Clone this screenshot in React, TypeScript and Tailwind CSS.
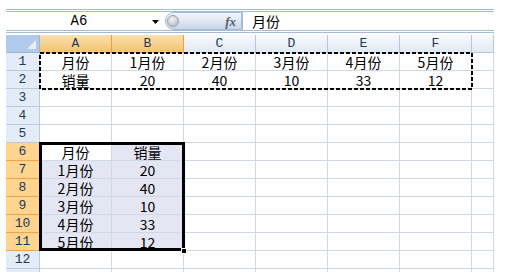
const COLS = ["A", "B", "C", "D", "E", "F", ""];

const DATA: string[][] = [
  ["月份", "1月份", "2月份", "3月份", "4月份", "5月份"],
  ["销量", "20", "40", "10", "33", "12"],
  [],
  [],
  [],
  ["月份", "销量"],
  ["1月份", "20"],
  ["2月份", "40"],
  ["3月份", "10"],
  ["4月份", "33"],
  ["5月份", "12"],
  [],
  [],
];

const cellFont = { fontFamily: '"Noto Sans CJK SC", "Liberation Sans", sans-serif' };
const headFont = { fontFamily: '"Liberation Mono", "Noto Sans CJK SC", monospace' };

function FormulaBar() {
  return (
    <div className="pt-[9px] pb-[2px]">
      <div className="ml-[6px] w-[488px] h-[24px] flex border-y-[3px] border-double border-[#a3bbd7] bg-white">
        <div className="w-[159px] flex items-center">
          <span className="w-[146px] text-center text-[14px] leading-none text-black" style={headFont}>
            A6
          </span>
          <svg width="7" height="4" viewBox="0 0 7 4" className="mt-[2px]">
            <path d="M0 0h7L3.5 4z" fill="#000" />
          </svg>
        </div>
        <div className="w-[77px] flex items-center justify-between rounded-l-full border border-[#a9bdd6] bg-gradient-to-b from-[#f6f8fb] to-[#c8d5e6]">
          <div className="ml-[1px] w-[12px] h-[12px] rounded-full bg-[radial-gradient(circle_at_40%_35%,#f4f5f7,#a9b0ba)] border border-[#9aa4b0]" />
          <span
            className="mr-[5px] text-[13px] italic font-bold text-[#56606c] leading-none"
            style={{ fontFamily: '"Liberation Serif", serif' }}
          >
            fx
          </span>
        </div>
        <div className="flex-1 flex items-center pl-[9px] border-l border-[#a3bbd7] text-[14px] leading-none text-black" style={cellFont}>
          月份
        </div>
      </div>
    </div>
  );
}

function Sheet() {
  return (
    <div className="relative ml-[6px] w-[488px] grid grid-cols-[34px_72px_72px_72px_72px_72px_72px_22px]">
      {/* header row */}
      <div className="relative h-[18px] bg-[#b2caea] border-r border-b border-[#9eb6ce]">
        <svg width="9" height="9" viewBox="0 0 9 9" className="absolute right-[3px] bottom-[3px]">
          <path d="M9 0v9H0z" fill="#e9eef5" />
        </svg>
      </div>
      {COLS.map((c, i) => {
        const sel = i < 2;
        return (
          <div
            key={`col${i}`}
            className={
              sel
                ? "h-[18px] flex items-center justify-center text-[13px] text-[#1e395b] bg-gradient-to-b from-[#fae0b0] to-[#f3c46c] border-r border-b border-[#f29b44]"
                : "h-[18px] flex items-center justify-center text-[13px] text-[#1e395b] bg-gradient-to-b from-[#f8fafd] to-[#e2e9f2] border-r border-b border-[#b4c6dc]"
            }
            style={headFont}
          >
            {c}
          </div>
        );
      })}

      {DATA.map((row, r) => {
        const selRow = r >= 5 && r <= 10;
        return [
          <div
            key={`h${r}`}
            className={
              selRow
                ? "h-[18px] flex items-center justify-center text-[13px] text-[#1e395b] bg-[#fed48e] border-r border-b border-[#f2a24a]"
                : "h-[18px] flex items-center justify-center text-[13px] text-[#1e395b] bg-[#e4ecf7] border-r border-b border-[#b9cbe0]"
            }
            style={headFont}
          >
            {r < 12 ? r + 1 : ""}
          </div>,
          ...COLS.map((_, c) => {
            const inSel = selRow && c < 2;
            const active = r === 5 && c === 0;
            return (
              <div
                key={`c${r}-${c}`}
                className={
                  inSel && !active
                    ? "h-[18px] overflow-hidden flex items-center justify-center text-[14px] leading-[16px] text-black bg-[#e4e6f3] border-r border-b border-[#d0d7e5]"
                    : "h-[18px] overflow-hidden flex items-center justify-center text-[14px] leading-[16px] text-black bg-white border-r border-b border-[#d0d7e5]"
                }
                style={cellFont}
              >
                {row[c] ?? ""}
              </div>
            );
          }),
        ];
      })}

      {/* copy marquee around A1:F2 */}
      <svg className="absolute left-[33px] top-[17px] pointer-events-none" width="434" height="38">
        <rect x="1" y="1" width="432" height="36" fill="none" stroke="#000" strokeWidth="2" strokeDasharray="4 2" />
      </svg>

      {/* selection A6:B11 */}
      <div className="absolute left-[33px] top-[107px] w-[146px] h-[109px] border-[3px] border-black pointer-events-none" />
      <div className="absolute left-[175px] top-[213px] w-[6px] h-[6px] bg-black border border-white" />
    </div>
  );
}

export default function App() {
  return (
    <div className="w-[505px] h-[272px] overflow-hidden bg-white">
      <FormulaBar />
      <Sheet />
    </div>
  );
}
